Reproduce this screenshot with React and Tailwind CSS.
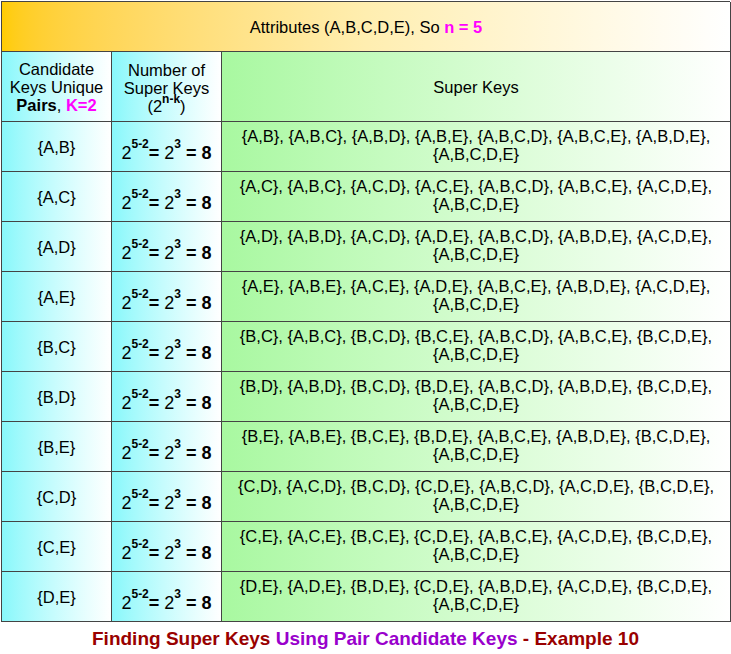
const rows = [
  ["{A,B}", "{A,B}, {A,B,C}, {A,B,D}, {A,B,E}, {A,B,C,D}, {A,B,C,E}, {A,B,D,E},"],
  ["{A,C}", "{A,C}, {A,B,C}, {A,C,D}, {A,C,E}, {A,B,C,D}, {A,B,C,E}, {A,C,D,E},"],
  ["{A,D}", "{A,D}, {A,B,D}, {A,C,D}, {A,D,E}, {A,B,C,D}, {A,B,D,E}, {A,C,D,E},"],
  ["{A,E}", "{A,E}, {A,B,E}, {A,C,E}, {A,D,E}, {A,B,C,E}, {A,B,D,E}, {A,C,D,E},"],
  ["{B,C}", "{B,C}, {A,B,C}, {B,C,D}, {B,C,E}, {A,B,C,D}, {A,B,C,E}, {B,C,D,E},"],
  ["{B,D}", "{B,D}, {A,B,D}, {B,C,D}, {B,D,E}, {A,B,C,D}, {A,B,D,E}, {B,C,D,E},"],
  ["{B,E}", "{B,E}, {A,B,E}, {B,C,E}, {B,D,E}, {A,B,C,E}, {A,B,D,E}, {B,C,D,E},"],
  ["{C,D}", "{C,D}, {A,C,D}, {B,C,D}, {C,D,E}, {A,B,C,D}, {A,C,D,E}, {B,C,D,E},"],
  ["{C,E}", "{C,E}, {A,C,E}, {B,C,E}, {C,D,E}, {A,B,C,E}, {A,C,D,E}, {B,C,D,E},"],
  ["{D,E}", "{D,E}, {A,D,E}, {B,D,E}, {C,D,E}, {A,B,D,E}, {A,C,D,E}, {B,C,D,E},"],
];

const cyan = "bg-gradient-to-r from-[#88f8fb] to-white";
const green = "bg-gradient-to-r from-[#a8f8a0] to-white";
const cell = "border-r border-b border-[#444] flex items-center justify-center text-center";
const sup = "font-bold text-[12px] relative -top-[9px] align-baseline";

export default function App() {
  return (
    <div className="w-[731px] h-[654px] bg-white text-black text-[16.5px] leading-[18px]" style={{ fontFamily: '"Liberation Sans", Arial, sans-serif' }}>
      <div className="ml-px mt-px w-[729px] border-l border-t border-[#444] grid grid-cols-[110px_110px_509px]">
        <div className={`${cell} col-span-3 h-[50px] bg-gradient-to-r from-[#ffcc00] via-[#ffeeb0] to-white`}>
          Attributes (A,B,C,D,E), So&nbsp;<b className="text-[#ff00ff]">n = 5</b>
        </div>
        <div className={`${cell} ${cyan} h-[70px] flex-col`}>
          <span>Candidate</span>
          <span>Keys Unique</span>
          <span><b>Pairs</b>, <b className="text-[#ff00ff]">K=2</b></span>
        </div>
        <div className={`${cell} ${cyan} h-[70px] flex-col pt-1`}>
          <span>Number of</span>
          <span>Super Keys</span>
          <span>(2<span className={sup}>n-k</span>)</span>
        </div>
        <div className={`${cell} ${green} h-[70px]`}>Super Keys</div>
        {rows.map(([k, s]) => (
          <div key={k} className="contents">
            <div className={`${cell} ${cyan} h-[50px]`}>{k}</div>
            <div className={`${cell} ${cyan} h-[50px] text-[18px] pt-3`}>
              2<span className={sup}>5-2</span><b>=</b>&nbsp;2<span className={sup}>3</span>&nbsp;<b>= 8</b>
            </div>
            <div className={`${cell} ${green} h-[50px] flex-col leading-[18px] pb-1`}>
              <span>{s}</span>
              <span>{"{A,B,C,D,E}"}</span>
            </div>
          </div>
        ))}
      </div>
      <div className="text-center font-bold text-[19px] mt-[8px]">
        <span className="text-[#990000]">Finding Super Keys </span>
        <span className="text-[#9900cc]">Using Pair Candidate Keys</span>
        <span className="text-[#990000]"> - Example 10</span>
      </div>
    </div>
  );
}
